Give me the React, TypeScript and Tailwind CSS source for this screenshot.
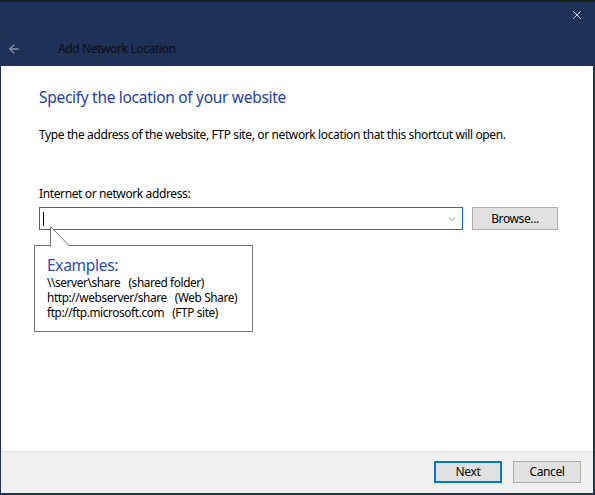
import { ArrowLeft, ChevronDown, X } from "lucide-react";

const font = { fontFamily: '"Noto Sans", "Segoe UI", sans-serif' };

export default function App() {
  return (
    <div className="w-[595px] h-[495px] flex flex-col bg-[#1e3159] border-t-2 border-[#1f1f1f] text-[12px] tracking-[-0.38px] text-black" style={font}>
      {/* header */}
      <div className="h-[64px] relative shrink-0">
        <button className="absolute right-[10px] top-[5px] w-[16px] h-[16px] flex items-center justify-center text-white">
          <X className="w-[14px] h-[14px]" strokeWidth={1.3} />
        </button>
        <div className="absolute left-[7px] top-[38px] flex items-center">
          <ArrowLeft className="w-[14px] h-[14px] text-[#8c93a3]" strokeWidth={2.2} />
          <span className="ml-[37px] text-[12px] text-[#0d0d0d]">Add Network Location</span>
        </div>
      </div>

      {/* body */}
      <div className="flex-1 flex flex-col ml-[1px] mr-[2px] bg-white">
        <div className="flex-1 pl-[38px] pr-[20px] pt-[21px]">
          <h1 className="text-[15.5px] tracking-[-0.3px] text-[#1e3ea6] leading-[20px]">Specify the location of your website</h1>
          <p className="mt-[20px] leading-[16px]">Type the address of the website, FTP site, or network location that this shortcut will open.</p>

          <div className="mt-[43px] leading-[16px]">Internet or network address:</div>
          <div className="mt-[5px] flex items-center">
            <div className="w-[424px] h-[23px] shrink-0 border border-[#0078d7] flex items-center pl-[3px] pr-[4px]">
              <div className="w-px h-[14px] bg-black" />
              <div className="flex-1" />
              <ChevronDown className="w-[12px] h-[12px] text-[#555]" strokeWidth={1.3} />
            </div>
            <button className="ml-[9px] w-[86px] h-[23px] shrink-0 bg-[#e1e1e1] border border-[#adadad] leading-none">Browse...</button>
          </div>

          {/* tooltip */}
          <div className="relative mt-[15px] -ml-[5px] w-[219px] h-[87px] border border-[#767676] bg-white pl-[12px] pt-[9px]">
            <svg className="absolute left-[15px] -top-[20px]" width="22" height="21" viewBox="0 0 22 21">
              <path d="M0.5 21 V0.5 L19.5 20" fill="white" stroke="#767676" strokeWidth="1" />
              <rect x="1" y="20" width="18" height="2" fill="white" />
            </svg>
            <div className="text-[15.5px] tracking-[-0.3px] text-[#2a4cb0] leading-[20px]">Examples:</div>
            <div className="text-[11.8px] leading-[15px] whitespace-pre">{"\\\\server\\share   (shared folder)"}</div>
            <div className="text-[11.8px] leading-[15px] whitespace-pre">{"http://webserver/share   (Web Share)"}</div>
            <div className="text-[11.8px] leading-[15px] whitespace-pre">{"ftp://ftp.microsoft.com   (FTP site)"}</div>
          </div>
        </div>

        {/* footer */}
        <div className="h-[42px] shrink-0 bg-[#f0f0f0] border-t border-[#dfdfdf] flex items-start justify-end pr-[12px] pt-[9px] gap-[11px]">
          <button className="w-[68px] h-[22px] bg-[#e1e1e1] border-2 border-[#0078d7] leading-none">Next</button>
          <button className="w-[68px] h-[22px] bg-[#e1e1e1] border border-[#adadad] leading-none">Cancel</button>
        </div>
      </div>
      <div className="h-[2px] shrink-0" />
    </div>
  );
}
